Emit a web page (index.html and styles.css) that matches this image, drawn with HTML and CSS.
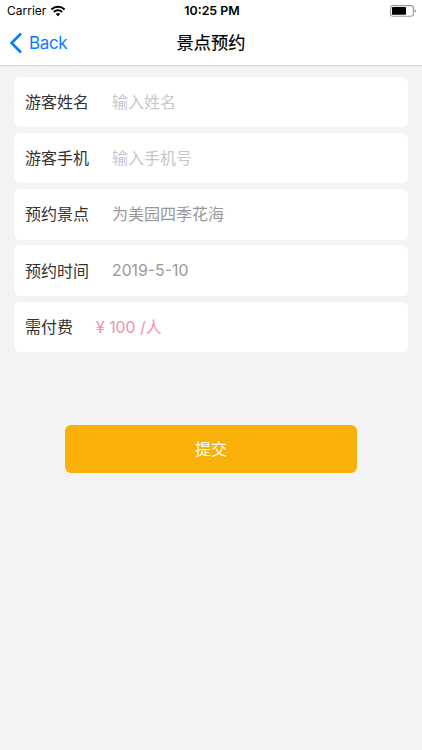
FILE: index.html
```html
<!DOCTYPE html>
<html lang="zh-CN">
<head>
<meta charset="utf-8">
<title>景点预约</title>
<link rel="stylesheet" href="styles.css">
</head>
<body>
<header class="top">
  <div class="status">
    <div class="carrier"><span>Carrier</span>
      <svg class="wifi" width="16" height="12" viewBox="0 0 16 12"><path d="M1.4 4.5a9.6 9.6 0 0 1 13.2 0M3.8 6.9a6.1 6.1 0 0 1 8.4 0" fill="none" stroke="#000" stroke-width="2"/><path d="M8 11.2 5.8 9a3.1 3.1 0 0 1 4.4 0z"/></svg>
    </div>
    <div class="clock">10:25 PM</div>
    <svg class="battery" width="27" height="12" viewBox="0 0 27 12"><rect x=".6" y=".6" width="22.8" height="10.6" rx="2.4" fill="none" stroke="#9a9a9a" stroke-width="1.1"/><rect x="2" y="2" width="14" height="7.8" rx=".8"/><path d="M24.6 4c1.9.5 1.9 3.3 0 3.8z" fill="#9a9a9a"/></svg>
  </div>
  <nav class="nav">
    <a class="back"><svg width="13" height="22" viewBox="0 0 13 22"><path d="M12 1.5 2.5 11l9.5 9.5" fill="none" stroke="#087eff" stroke-width="2.6"/></svg><span>Back</span></a>
    <h1>景点预约</h1>
  </nav>
</header>
<main class="form">
  <div class="row"><label>游客姓名</label><span class="hint">输入姓名</span></div>
  <div class="row"><label>游客手机</label><span class="hint">输入手机号</span></div>
  <div class="row"><label>预约景点</label><span class="value">为美园四季花海</span></div>
  <div class="row"><label>预约时间</label><span class="value date">2019-5-10</span></div>
  <div class="row fee"><label>需付费</label><span class="price">¥ 100 /人</span></div>
  <button class="submit">提交</button>
</main>
</body>
</html>
```
FILE: styles.css
```css
* { box-sizing: border-box; }
body { margin: 0; height: 750px; background: #f3f3f3; font-family: Inter, "Noto Sans CJK SC", sans-serif; overflow: hidden; }
.top { height: 66px; background: #fff; border-bottom: 1px solid #cfcfd1; }
.status { height: 22px; display: grid; grid-template-columns: 1fr auto 1fr; align-items: center; padding: 0 5px 1px 7px; font-size: 12px; }
.carrier { display: flex; align-items: center; gap: 4px; }
.clock { font-weight: 600; font-size: 12.4px; }
.battery { justify-self: end; }
.nav { height: 42px; display: grid; grid-template-columns: 1fr auto 1fr; align-items: center; padding: 0 9px; }
.back { display: flex; align-items: center; gap: 7px; color: #087eff; font-size: 17px; letter-spacing: -.35px; }
h1 { margin: 0; font-size: 17.2px; line-height: 24px; font-weight: 400; -webkit-text-stroke: .2px #000; }
.form { padding: 10.5px 14px; display: flex; flex-direction: column; gap: 5.7px; }
.row { height: 50.6px; display: flex; align-items: center; padding: 0 0 2px 11px; gap: 23px; border-radius: 6px; background: #fff; font-size: 16px; color: #333; }
.hint { color: #c7c7cd; }
.value { color: #999; }
.date { font-size: 15.8px; }
.row .date, .row .price { padding-top: 1px; }
.price { color: #f78cb1; font-size: 15.8px; font-weight: 370; }
.submit { width: 292.5px; height: 48px; margin: 67.5px auto 0; padding: 0 0 2px; border: 0; border-radius: 6px; background: #f9b008; color: #fff; font: inherit; font-size: 16px; }
```
